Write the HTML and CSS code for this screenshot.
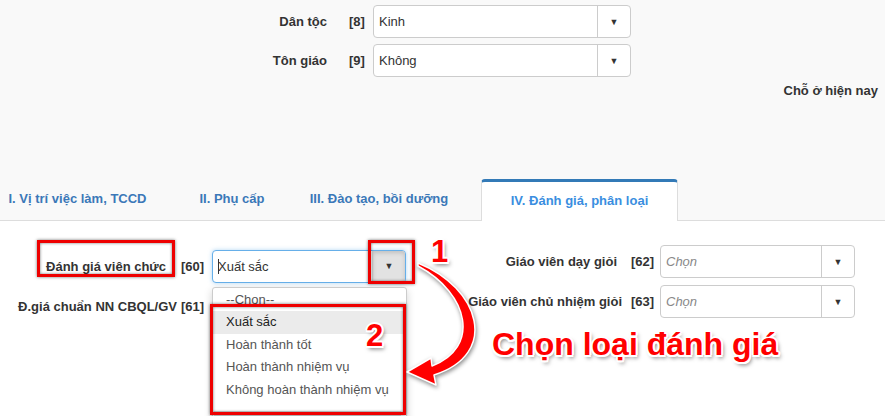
FILE: index.html
```html
<!DOCTYPE html>
<html lang="vi">
<head>
<meta charset="utf-8">
<title>Hồ sơ viên chức – Đánh giá, phân loại</title>
<link rel="stylesheet" href="styles.css">
</head>
<body>
<div class="page">

  <!-- THÔNG TIN CHUNG -->
  <section class="top">
    <div class="frow">
      <label class="lbl">Dân tộc</label><span class="num">[8]</span>
      <div class="sel"><span class="val">Kinh</span><span class="arr">▼</span></div>
    </div>
    <div class="frow">
      <label class="lbl">Tôn giáo</label><span class="num">[9]</span>
      <div class="sel"><span class="val">Không</span><span class="arr">▼</span></div>
    </div>
    <div class="here">Chỗ ở hiện nay</div>
  </section>

  <!-- TABS -->
  <nav class="tabs">
    <a class="tab t1">I. Vị trí việc làm, TCCD</a>
    <a class="tab t2">II. Phụ cấp</a>
    <a class="tab t3">III. Đào tạo, bồi dưỡng</a>
    <a class="tab t4 active">IV. Đánh giá, phân loại</a>
  </nav>

  <!-- ĐÁNH GIÁ -->
  <section class="pane">
    <div class="grp left">
      <label class="lbl pad-a">Đánh giá viên chức</label><span class="num">[60]</span>
      <div class="sel focus">
        <span class="val"><span class="cursor"></span>Xuất sắc</span>
        <span class="arr pressed">▼</span>
        <ul class="dd">
          <li>--Chon--</li>
          <li class="hl">Xuất sắc</li>
          <li>Hoàn thành tốt</li>
          <li>Hoàn thành nhiệm vụ</li>
          <li>Không hoàn thành nhiệm vụ</li>
          <li class="bar"></li>
        </ul>
      </div>
      <label class="lbl">Đ.giá chuẩn NN CBQL/GV</label><span class="num">[61]</span>
      <div></div>
    </div>

    <div class="grp right">
      <label class="lbl pad-b">Giáo viên dạy giỏi</label><span class="num">[62]</span>
      <div class="sel"><span class="val ph">Chọn</span><span class="arr">▼</span></div>
      <label class="lbl">Giáo viên chủ nhiệm giỏi</label><span class="num">[63]</span>
      <div class="sel"><span class="val ph">Chọn</span><span class="arr">▼</span></div>
    </div>
  </section>

  <!-- ANNOTATIONS -->
  <div class="box b-label"></div>
  <div class="box b-arrow"></div>
  <div class="box b-list"></div>
  <div class="step s1">1</div>
  <div class="step s2">2</div>
  <div class="callout">Chọn loại đánh giá</div>
  <svg class="curve" width="885" height="416" viewBox="0 0 885 416">
    <path d="M418,263 C480,288 500,354 434,375 L436,385 L407,372 L431,358 L432,366 C480,348 470,294 418,266 Z"/>
  </svg>

</div>
</body>
</html>
```

FILE: styles.css
```css
*{box-sizing:border-box;margin:0;padding:0}
body{font-family:"Liberation Sans",Arial,sans-serif;color:#333;background:#fff}
.page{position:relative;width:885px;height:416px;overflow:hidden;background:#fff}

/* ---------- TOP ---------- */
.top{background:#f9f9f9;height:179px;padding-top:5px}
.frow{display:grid;grid-template-columns:327px 46px 258px;align-items:center;margin-bottom:6px;font-size:13px}
.frow .num{padding-left:22px}
.lbl{font-weight:700;text-align:right;color:#333}
.num{font-weight:700}
.here{text-align:right;padding-right:7px;font-weight:700;font-size:13px;line-height:18px;margin-top:-1px}

/* ---------- SELECT ---------- */
.sel{position:relative;display:flex;height:33px;background:#fff;border:1px solid #ccc;border-radius:4px}
.sel .val{flex:1;display:flex;align-items:center;padding-left:5px}
.sel .arr{width:33px;border-left:1px solid #ccc;display:flex;align-items:center;justify-content:center;font-size:9px;color:#333}
.sel .ph{font-style:italic;color:#888}
.sel.focus{border-color:#66afe9;box-shadow:0 0 4px rgba(102,175,233,.5)}
.sel .arr.pressed{background:#e2e2e2;border-color:#ccc;border-radius:0 3px 3px 0;box-shadow:inset 0 2px 4px rgba(0,0,0,.15)}
.cursor{display:inline-block;width:1px;height:15px;background:#333;margin-right:-1px}

/* ---------- TABS ---------- */
.tabs{display:flex;align-items:flex-end;height:42px;background:#f9f9f9;border-bottom:1px solid #ddd;font-size:13px;font-weight:700}
.tab{display:flex;align-items:center;justify-content:center;height:41px;padding-bottom:3px;color:#3b78b8;white-space:nowrap}
.t1{width:155px}
.t2{width:154px}
.t3{width:140px;margin-right:32px}
.tab.active{width:197px;height:42px;margin-bottom:-1px;padding-bottom:2px;background:#fff;color:#3a8ee0;border:1px solid #ddd;border-top:3px solid #337ab7;border-bottom:0;border-radius:4px 4px 0 0}

/* ---------- PANE ---------- */
.pane{display:flex;padding-top:24px;font-size:13px}
.grp{display:grid;row-gap:7px;align-items:center}
.grp.left{grid-template-columns:177px 35px 194px}
.grp.left .num{padding-left:4px}
.grp.right{grid-template-columns:216px 38px 195px}
.grp.right .num{padding-left:9px}
.pad-a{padding-right:11px}
.pad-b{padding-right:5px}

/* dropdown list */
.dd{position:absolute;left:-1px;top:36px;width:195px;height:140px;list-style:none;background:#fff;border:1px solid #ccc;border-radius:3px;box-shadow:0 3px 8px rgba(0,0,0,.18);padding-top:1px;font-size:13px;color:#555}
.dd li{line-height:22.5px;padding-left:13px}
.dd li.hl{background:#ebebeb;color:#222}
.dd li.bar{height:6px;margin:10px 5px 0 1px;padding:0;background:#ddd}

/* ---------- ANNOTATIONS ---------- */
.box{position:absolute;border:3px solid #ee0000;box-shadow:0 0 3px rgba(0,0,0,.55),inset 0 0 3px rgba(0,0,0,.55)}
.b-label{left:37px;top:240px;width:138px;height:37px}
.b-arrow{left:368px;top:240px;width:47px;height:44px}
.b-list{left:210px;top:304px;width:196px;height:111px}
.step,.callout{position:absolute;font-weight:700;color:#f00;line-height:1;
  text-shadow:2px 0 0 #fff,-2px 0 0 #fff,0 2px 0 #fff,0 -2px 0 #fff,1.5px 1.5px 0 #fff,-1.5px 1.5px 0 #fff,1.5px -1.5px 0 #fff,-1.5px -1.5px 0 #fff,2px 3px 4px rgba(0,0,0,.55)}
.step{font-size:31px}
.s1{left:431px;top:236px}
.s2{left:366px;top:320px}
.callout{left:492px;top:328px;font-size:32px}
.curve{position:absolute;left:0;top:0;pointer-events:none;filter:drop-shadow(1px 2px 2px rgba(0,0,0,.45))}
.curve path{fill:#f00;stroke:#fff;stroke-width:1.5;stroke-linejoin:round}
```
